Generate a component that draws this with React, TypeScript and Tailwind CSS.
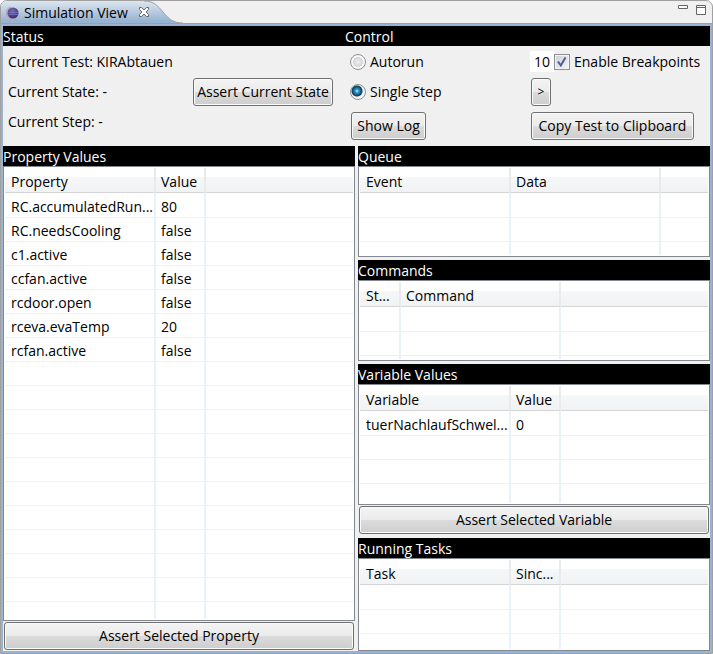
import type { ReactNode } from 'react';

type Column = { label: string; width: string };

const BUTTON =
  'h-7 whitespace-nowrap rounded-[3px] border border-[#707070] bg-[linear-gradient(#f3f3f3,#ebebeb_50%,#dcdcdc_50%,#cdcdcd)] text-center leading-5 shadow-[inset_0_0_0_1px_#fafafa]';

function SectionTitle({ children }: { children: ReactNode }) {
  return <h2 className="h-5 shrink-0 bg-black leading-[22px] text-white">{children}</h2>;
}

function DataTable({
  label,
  columns,
  rows = [],
  lines,
  className,
}: {
  label: string;
  columns: Column[];
  rows?: string[][];
  lines: number;
  className: string;
}) {
  const filler = Array.from({ length: lines - rows.length }, () => columns.map(() => ''));
  return (
    <div className={`overflow-hidden border border-[#828790] bg-white p-px ${className}`}>
      <div className="h-full overflow-hidden">
        <table aria-label={label} className="w-full table-fixed border-separate border-spacing-0 text-left">
          <thead>
            <tr className="h-[25px] bg-[linear-gradient(#ffffff_9px,#f6f7f9_9px,#f1f2f4)]">
              {columns.map((c) => (
                <th
                  key={c.label}
                  className={`${c.width} whitespace-nowrap border-b border-r-2 border-b-[#d5d5d5] border-r-[#e8eaec] pl-[5px] pt-1 font-normal leading-5 first:pl-1.5`}
                >
                  {c.label}
                </th>
              ))}
              <td className="border-b border-[#d5d5d5]" />
            </tr>
          </thead>
          <tbody>
            {[...rows, ...filler].map((row, i) => (
              <tr key={i} className="h-6 align-bottom first:h-[25px]">
                {row.map((cell, j) => (
                  <td
                    key={j}
                    className="whitespace-nowrap border-b border-r-2 border-b-[#eff0f2] border-r-[#ebf1fa] pl-[5px] leading-5 first:pl-1.5"
                  >
                    {cell}
                  </td>
                ))}
                <td className="border-b border-[#eff0f2]" />
              </tr>
            ))}
          </tbody>
        </table>
      </div>
    </div>
  );
}

function EclipseIcon() {
  return (
    <svg width="14" height="14" viewBox="0 0 14 14" aria-hidden="true">
      <defs>
        <radialGradient id="sphere" cx="45%" cy="30%" r="70%">
          <stop offset="0" stopColor="#7a6db0" />
          <stop offset="1" stopColor="#3a2c6c" />
        </radialGradient>
      </defs>
      <path d="M6 1.2A6 6 0 0 0 6 12.8" fill="none" stroke="#c3a3b8" strokeWidth="1.6" />
      <circle cx="8" cy="7" r="5.5" fill="url(#sphere)" />
      <path d="M2 6.500H14M2 8.500H13.500" stroke="#7f86d0" strokeWidth="0.6" />
    </svg>
  );
}

function TitleBar() {
  return (
    <header className="relative flex h-[23px] shrink-0 items-center overflow-hidden rounded-t-[6px] border-b border-[#a0a0a0]">
      <svg className="absolute left-0 top-0" width="184" height="23" viewBox="0 0 184 23" aria-hidden="true">
        <defs>
          <linearGradient id="tab" x1="0" y1="0" x2="0" y2="1">
            <stop offset="0" stopColor="#dde6f0" />
            <stop offset="0.85" stopColor="#99b4d1" />
            <stop offset="1" stopColor="#99b4d1" />
          </linearGradient>
        </defs>
        <path d="M0 0H145C153 0 157 5 162 11C168 18 172 22 182 22V23H0Z" fill="url(#tab)" />
        <path d="M143 0C153 0 157 5 162 11C168 18 172 22 182 22" fill="none" stroke="#a0a0a0" />
      </svg>
      <h1 className="relative flex items-center pl-1 pt-0.5 text-[14px] leading-5">
        <EclipseIcon />
        <span className="pl-[5px]">Simulation View</span>
      </h1>
      <button type="button" aria-label="Close" className="relative ml-2.5">
        <svg width="12" height="12" viewBox="0 0 12 12" aria-hidden="true">
          <path
            d="M1.500 1.500H3.500L6 4L8.500 1.500H10.500V3.500L8 6L10.500 8.500V10.500H8.500L6 8L3.500 10.500H1.500V8.500L4 6L1.500 3.500Z"
            fill="#fff"
            stroke="#666"
          />
        </svg>
      </button>
      <div className="ml-auto flex items-start gap-2 pb-1 pr-1.5">
        <button type="button" aria-label="Minimize">
          <svg width="10" height="10" viewBox="0 0 10 10" aria-hidden="true">
            <path d="M.5 .5H9.500V3.500H.5Z" fill="#fff" stroke="#666" />
          </svg>
        </button>
        <button type="button" aria-label="Maximize">
          <svg width="10" height="10" viewBox="0 0 10 10" aria-hidden="true">
            <path d="M.5 .5H9.500V9.500H.5ZM.5 2.500H9.500" fill="#fff" stroke="#666" />
          </svg>
        </button>
      </div>
    </header>
  );
}

const RADIO =
  'size-4 shrink-0 appearance-none rounded-full border border-[#8e8f8f] bg-[radial-gradient(circle,#eeeeee_0,#d2d5d9_5px,#f8f8f8_5px)] checked:bg-[radial-gradient(circle_at_6px_6px,#b9ecff_0,#2a93c8_2px,#0b3c5d_5px,#f4f4f4_6px)]';

function Radio({ label, checked }: { label: string; checked?: boolean }) {
  return (
    <label className="flex h-[21px] items-center gap-1 leading-5">
      <input type="radio" name="mode" defaultChecked={checked} className={RADIO} />
      {label}
    </label>
  );
}

function StatusPanel() {
  return (
    <section className="w-[342px] shrink-0">
      <SectionTitle>Status</SectionTitle>
      <div className="flex items-center justify-between pl-[5px] pr-3 pt-1.5">
        <div className="flex flex-col gap-2.5 leading-5">
          <p>Current Test: KIRAbtauen</p>
          <p>Current State: -</p>
          <p>Current Step: -</p>
        </div>
        <button type="button" className={`${BUTTON} w-[140px]`}>
          Assert Current State
        </button>
      </div>
    </section>
  );
}

function ControlPanel() {
  return (
    <section className="min-w-0 grow">
      <SectionTitle>Control</SectionTitle>
      <div className="grid grid-cols-[180px_1fr] grid-rows-[21px_28px_28px] items-center gap-y-1.5 pl-[5px] pt-[5px]">
        <Radio label="Autorun" />
        <div className="flex items-center">
          <input
            aria-label="Delay"
            defaultValue="10"
            className="h-[21px] w-6 bg-white pl-1 leading-5 outline-none"
          />
          <label className="flex items-center whitespace-nowrap leading-5">
            <span className="relative mr-1 flex size-4">
              <input
                type="checkbox"
                defaultChecked
                className="size-4 appearance-none border border-[#8e8f8f] bg-[linear-gradient(135deg,#cbd0d8,#f6f6f6)] shadow-[inset_0_0_0_1px_#f4f4f4]"
              />
              <svg className="pointer-events-none absolute inset-0" width="16" height="16" viewBox="0 0 16 16" aria-hidden="true">
                <path d="M4 7.500L6.800 11.500L11.500 3.500" fill="none" stroke="#4a5f97" strokeWidth="2" />
              </svg>
            </span>
            Enable Breakpoints
          </label>
        </div>
        <Radio label="Single Step" checked />
        <button type="button" aria-label="Step" className={`${BUTTON} ml-px w-5 text-[12px]`}>
          &gt;
        </button>
        <button type="button" className={`${BUTTON} ml-px w-[75px]`}>
          Show Log
        </button>
        <button type="button" className={`${BUTTON} ml-px w-[163px]`}>
          Copy Test to Clipboard
        </button>
      </div>
    </section>
  );
}

const PROPERTIES = [
  ['RC.accumulatedRun...', '80'],
  ['RC.needsCooling', 'false'],
  ['c1.active', 'false'],
  ['ccfan.active', 'false'],
  ['rcdoor.open', 'false'],
  ['rceva.evaTemp', '20'],
  ['rcfan.active', 'false'],
];

export default function App() {
  return (
    <div className="flex h-screen min-h-[640px] flex-col rounded-t-[7px] border border-[#a0a0a0] bg-[#f0f0f0] font-['Open_Sans','Noto_Sans',sans-serif] text-[14px] text-black">
      <TitleBar />
      <main className="flex min-h-0 grow flex-col border-2 border-[#99b4d1]">
        <div className="flex h-[120px] shrink-0">
          <StatusPanel />
          <ControlPanel />
        </div>
        <div className="grid min-h-0 grow grid-cols-2 gap-[3px]">
          <section className="flex min-h-0 min-w-0 flex-col">
            <SectionTitle>Property Values</SectionTitle>
            <DataTable
              label="Property Values"
              className="min-h-0 flex-1"
              columns={[
                { label: 'Property', width: 'w-[151px]' },
                { label: 'Value', width: 'w-[50px]' },
              ]}
              rows={PROPERTIES}
              lines={18}
            />
            <button type="button" className={`${BUTTON} mx-px mb-px mt-px shrink-0`}>
              Assert Selected Property
            </button>
          </section>
          <div className="flex min-h-0 min-w-0 flex-col">
            <SectionTitle>Queue</SectionTitle>
            <DataTable
              label="Queue"
              className="mb-[3px] h-[91px] shrink-0"
              columns={[
                { label: 'Event', width: 'w-[151px]' },
                { label: 'Data', width: 'w-[150px]' },
              ]}
              lines={3}
            />
            <SectionTitle>Commands</SectionTitle>
            <DataTable
              label="Commands"
              className="mb-[3px] h-[81px] shrink-0"
              columns={[
                { label: 'St...', width: 'w-[41px]' },
                { label: 'Command', width: 'w-[160px]' },
              ]}
              lines={3}
            />
            <SectionTitle>Variable Values</SectionTitle>
            <DataTable
              label="Variable Values"
              className="h-[121px] shrink-0"
              columns={[
                { label: 'Variable', width: 'w-[151px]' },
                { label: 'Value', width: 'w-[50px]' },
              ]}
              rows={[['tuerNachlaufSchwel...', '0']]}
              lines={4}
            />
            <button type="button" className={`${BUTTON} mx-px mb-1 mt-px shrink-0`}>
              Assert Selected Variable
            </button>
            <SectionTitle>Running Tasks</SectionTitle>
            <DataTable
              label="Running Tasks"
              className="min-h-0 flex-1"
              columns={[
                { label: 'Task', width: 'w-[151px]' },
                { label: 'Sinc...', width: 'w-[50px]' },
              ]}
              lines={3}
            />
          </div>
        </div>
      </main>
    </div>
  );
}
